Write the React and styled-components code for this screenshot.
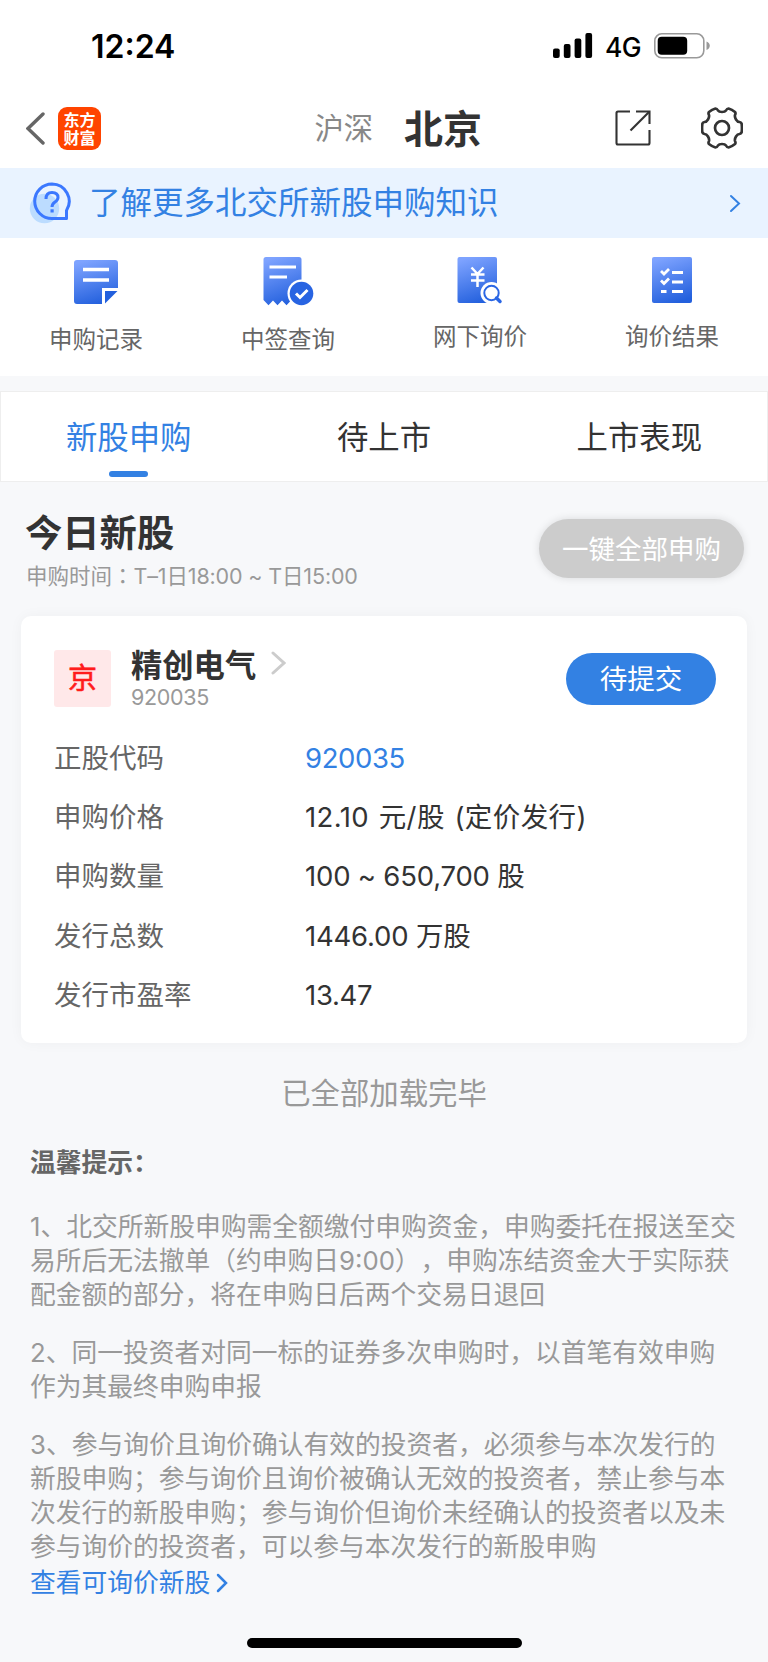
import React from 'react';
import styled, { createGlobalStyle } from 'styled-components';

const GlobalStyle = createGlobalStyle`
  * {
    box-sizing: border-box;
  }

  body {
    margin: 0;
    background: #f7f8fa;
    font-family: Inter, 'Noto Sans CJK SC', sans-serif;
    text-spacing-trim: space-all;
    color: #333;
  }

  svg {
    display: block;
    flex: none;
  }
`;

const Page = styled.div`
  width: 768px;
  height: 1662px;
  display: flex;
  flex-direction: column;
  overflow: hidden;
  white-space: nowrap;
`;

const StatusBar = styled.div`
  height: 88px;
  padding: 4px 58px 0 91px;
  display: flex;
  align-items: center;
  background: #fff;
  color: #000;
`;

const Clock = styled.span`
  font-size: 32px;
  font-weight: 600;
`;

const StatusIcons = styled.div`
  margin-left: auto;
  display: flex;
  align-items: center;
`;

const Network = styled.span`
  width: 36px;
  margin: 2px 13px 0 12px;
  font-size: 26.5px;
  font-weight: 500;
  letter-spacing: -0.6px;
`;

const NavBar = styled.div`
  height: 80px;
  padding: 0 25px 0 26px;
  display: flex;
  align-items: center;
  background: #fff;
`;

const Logo = styled.div`
  width: 43px;
  height: 43px;
  margin-left: 13px;
  padding: 3px 5px 0 5.5px;
  border-radius: 9px;
  background: #ff4400;
  color: #fff;
  font-family: 'Noto Sans CJK SC', sans-serif;
  font-size: 16px;
  font-weight: 700;
  line-height: 18px;
  white-space: normal;
`;

const Markets = styled.div`
  margin-left: 213.5px;
  padding-top: 2px;
  display: flex;
  align-items: center;
`;

const Market = styled.span`
  font-size: ${({ $active }) => ($active ? '39px' : '29.3px')};
  font-weight: ${({ $active }) => ($active ? 700 : 400)};
  color: ${({ $active }) => ($active ? '#333' : '#888')};
  line-height: 48px;
  margin-right: ${({ $active }) => ($active ? 0 : '31px')};
`;

const NavActions = styled.div`
  margin-left: auto;
  display: flex;
  align-items: center;
  gap: 50px;
`;

const Banner = styled.div`
  height: 70px;
  padding: 0 27px 0 29px;
  display: flex;
  align-items: center;
  background: #e9f3ff;
  color: #3381e3;
`;

const BannerText = styled.span`
  flex: 1;
  margin-left: 17px;
  font-size: 31.5px;
  line-height: 46px;
`;

const Menu = styled.div`
  height: 138px;
  display: grid;
  grid-template-columns: repeat(4, 1fr);
  background: #fff;
`;

const MenuItem = styled.div`
  padding-top: 19px;
  display: flex;
  flex-direction: column;
  align-items: center;
`;

const MenuLabel = styled.span`
  margin-top: ${({ $gap }) => $gap}px;
  font-size: 23.5px;
  line-height: 34px;
  color: #666;
`;

const Tabs = styled.div`
  height: 91px;
  margin-top: 15px;
  display: grid;
  grid-template-columns: repeat(3, 1fr);
  background: #fff;
  border: 1px solid #eee;
`;

const Tab = styled.div`
  padding-top: 23px;
  display: flex;
  flex-direction: column;
  align-items: center;
  font-size: 31.4px;
  line-height: 46px;
  color: ${({ $active }) => ($active ? '#3381e3' : '#333')};

  &::after {
    content: '';
    width: 39px;
    height: 6px;
    margin-top: 10px;
    border-radius: 3px;
    background: ${({ $active }) => ($active ? '#3381e3' : 'transparent')};
  }
`;

const SectionHead = styled.div`
  height: 134px;
  padding: 26px 24px 0 25px;
  display: flex;
  justify-content: space-between;
`;

const SectionTitle = styled.h2`
  margin: 0;
  font-size: 37.3px;
  font-weight: 700;
  line-height: 52px;
`;

const SectionNote = styled.p`
  margin: 0;
  padding-left: 1px;
  font-size: 21.5px;
  line-height: 29px;
  color: #999;
`;

const NoteTime = styled.span`
  letter-spacing: -0.15px;
`;

// the TC face keeps the full-width colon in the middle of its cell
const MidColon = styled.span`
  font-family: 'Noto Sans CJK TC', sans-serif;
`;

const PillButton = styled.button`
  width: ${({ $width }) => $width}px;
  height: ${({ $height }) => $height}px;
  padding: 0 0 3px;
  border: 0;
  border-radius: 30px;
  background: ${({ $disabled }) => ($disabled ? '#ccc' : '#3381e3')};
  box-shadow: ${({ $disabled }) => ($disabled ? '0 0 8px rgba(0, 0, 0, 0.12)' : 'none')};
  color: #fff;
  font-family: inherit;
  font-size: ${({ $size }) => $size}px;
`;

const ApplyAll = styled(PillButton)`
  margin-top: 11px;
`;

const Submit = styled(PillButton)`
  margin-top: 2.5px;
`;

const Card = styled.div`
  height: 427px;
  margin: 0 21px;
  padding: 34px 31px 0 33px;
  border-radius: 10px;
  background: #fff;
  box-shadow: 0 0 14px rgba(0, 0, 0, 0.04);
`;

const StockHead = styled.div`
  height: 78px;
  display: flex;
  align-items: flex-start;
`;

const Badge = styled.div`
  width: 57px;
  height: 57px;
  border-radius: 3px;
  background: #ffe8e9;
  color: #ff1c1c;
  font-size: 29px;
  line-height: 57px;
  text-align: center;
  -webkit-text-stroke: 0.6px #ff1c1c;
`;

const StockInfo = styled.div`
  flex: 1;
  margin-left: 20px;
  margin-top: -6px;
`;

const StockName = styled.div`
  display: flex;
  align-items: center;
  gap: 15px;
  font-size: 31.3px;
  font-weight: 700;
  line-height: 44px;

  svg {
    margin-top: -6px;
  }
`;

const StockCode = styled.div`
  margin-top: -2px;
  font-size: 21.5px;
  line-height: 22px;
  letter-spacing: -0.3px;
  color: #999;
`;

const Row = styled.div`
  height: 59.3px;
  display: flex;
  align-items: center;
  font-size: 27.5px;
  line-height: 40px;
`;

const RowLabel = styled.span`
  width: 251px;
  color: #666;
`;

const RowValue = styled.span`
  letter-spacing: ${({ $spacing }) => $spacing || 0}px;
  word-spacing: ${({ $wordSpacing }) => $wordSpacing || 0}px;
  color: ${({ $link }) => ($link ? '#3381e3' : '#333')};
`;

const LoadedText = styled.p`
  height: 44px;
  margin: 29px 0 0;
  font-size: 29.4px;
  line-height: 44px;
  text-align: center;
  color: #999;
`;

const Tips = styled.div`
  padding: 30px 30px 0;
  font-size: 25.75px;
  line-height: 34px;
  color: #999;
`;

const TipsTitle = styled.h3`
  margin: 0 0 30px;
  font-size: 25.75px;
  font-weight: 700;
  color: #666;
`;

const Tip = styled.p`
  margin: 0 0 24px;
`;

const Line = styled.span`
  display: block;
`;

const MoreLink = styled.a`
  margin-top: -22px;
  display: flex;
  align-items: center;
  gap: 6px;
  color: #3381e3;
`;

const HomeBar = styled.div`
  width: 275px;
  height: 10px;
  margin: auto auto 14px;
  border-radius: 5px;
  background: #000;
`;

const Chevron = ({ width, height, color, stroke, flip }) => (
  <svg width={width} height={height} viewBox={`0 0 ${width} ${height}`} fill="none">
    <path
      d={
        flip
          ? `M${width - 2} 2 L2 ${height / 2} L${width - 2} ${height - 2}`
          : `M2 2 L${width - 2} ${height / 2} L2 ${height - 2}`
      }
      stroke={color}
      strokeWidth={stroke}
      strokeLinecap="round"
    />
  </svg>
);

const SignalIcon = () => (
  <svg width="40" height="26" viewBox="0 0 40 26">
    <rect x="0" y="15.5" width="6.7" height="9.5" rx="2" />
    <rect x="10.8" y="11" width="6.7" height="14" rx="2" />
    <rect x="21.6" y="5.5" width="6.7" height="19.5" rx="2" />
    <rect x="32.4" y="0" width="6.7" height="25" rx="2" />
  </svg>
);

const BatteryIcon = () => (
  <svg width="56" height="26" viewBox="0 0 56 26">
    <rect x="0.8" y="0.8" width="49" height="24" rx="7" fill="none" stroke="#999" strokeWidth="1.6" />
    <rect x="3.7" y="3.7" width="29.5" height="18" rx="4" />
    <path d="M52.5 8.5 Q55.8 10 55.8 12.8 Q55.8 15.5 52.5 17 Z" fill="#999" />
  </svg>
);

const ShareIcon = () => (
  <svg width="36" height="36" viewBox="0 0 36 36" fill="none" stroke="#333" strokeWidth="2.1">
    <path d="M15 1.5 H3 Q1.5 1.5 1.5 3 V33 Q1.5 34.5 3 34.5 H33 Q34.5 34.5 34.5 33 V20" />
    <path d="M21 1.5 H34.5 V14" />
    <path d="M34 2 L15.5 20.5" />
  </svg>
);

const GearIcon = () => (
  <svg width="42" height="42" viewBox="0 0 42 42" fill="none" stroke="#333" strokeWidth="2.7" strokeLinejoin="round">
    <path d="M14.5 1.5 Q16 1.5 17 3.5 Q18 5 21 5 Q24 5 25 3.5 Q26 1.5 27.5 1.5 Q31 2.5 34 5 Q35 6 34 8 Q33.5 10 35 12.5 Q36.5 15 38.5 15 Q40.5 15.5 40.7 17 Q41.2 21 40.7 25 Q40.5 26.5 38.5 27 Q36.5 27 35 29.5 Q33.5 32 34 34 Q35 36 34 37 Q31 39.5 27.5 40.5 Q26 40.5 25 38.5 Q24 37 21 37 Q18 37 17 38.5 Q16 40.5 14.5 40.5 Q11 39.5 8 37 Q7 36 8 34 Q8.5 32 7 29.5 Q5.5 27 3.5 27 Q1.5 26.5 1.3 25 Q0.8 21 1.3 17 Q1.5 15.5 3.5 15 Q5.5 15 7 12.5 Q8.5 10 8 8 Q7 6 8 5 Q11 2.5 14.5 1.5 Z" />
    <circle cx="21" cy="21" r="7" />
  </svg>
);

const HelpIcon = () => (
  <svg width="43" height="42" viewBox="0 0 43 42" fill="none">
    <circle cx="15.5" cy="26.5" r="14.7" fill="#bcdcff" />
    <path
      d="M23 2 A17.3 17.3 0 1 0 23 36.600 H37.500 V28.500 A17.300 17.300 0 0 0 23 2 Z"
      stroke="#3b78ff"
      strokeWidth="3"
      strokeLinejoin="round"
    />
    <path d="M17 17 Q17 10.5 23 10.5 Q29 10.5 29 15.5 Q29 18 26 20 Q23 22 23 25" stroke="#3b78ff" strokeWidth="3" />
    <rect x="21.5" y="27.3" width="3.2" height="3.2" fill="#3b78ff" />
  </svg>
);

const Gradient = ({ id }) => (
  <defs>
    <linearGradient id={id} x1="0.3" y1="0" x2="0.6" y2="1">
      <stop offset="0" stopColor="#7ea3ff" />
      <stop offset="1" stopColor="#2360dd" />
    </linearGradient>
  </defs>
);

const RecordIcon = () => (
  <svg width="50" height="50" viewBox="0 0 50 50">
    <Gradient id="record" />
    <path d="M6 3 H44 Q47 3 47 6 V31 H31 V47 H6 Q3 47 3 44 V6 Q3 3 6 3 Z" fill="url(#record)" />
    <path d="M34 34 H46.5 L34 46.5 Z" fill="#2360dd" />
    <path d="M12 12.5 H38 M12 23 H38" stroke="#fff" strokeWidth="3.4" />
  </svg>
);

const LotteryIcon = () => (
  <svg width="52" height="50" viewBox="0 0 52 50">
    <Gradient id="lottery" />
    <path
      d="M4 0 H37 Q39.5 0 39.5 2.5 V44 H28.5 L24.5 48.2 L20 43.5 L15.5 48.2 L11 43.5 L6.5 48.2 L1.5 43 V2.5 Q1.5 0 4 0 Z"
      fill="url(#lottery)"
    />
    <path d="M7.5 10 H34 M7.5 20 H25" stroke="#fff" strokeWidth="3.2" />
    <circle cx="39.5" cy="36.5" r="14" fill="#fff" />
    <circle cx="39.5" cy="36.5" r="11.8" fill="#2864e2" />
    <path d="M34 36.5 L38 40.5 L45.5 33" stroke="#fff" strokeWidth="3" fill="none" />
  </svg>
);

const InquiryIcon = () => (
  <svg width="46" height="50" viewBox="0 0 46 50">
    <Gradient id="inquiry" />
    <rect x="0.5" y="0" width="39.5" height="46" rx="2" fill="url(#inquiry)" />
    <path d="M14.5 10.5 L20.5 17 L26.5 10.5 M20.5 17 V30 M14 17.5 H27.5 M14 23.5 H27.5" stroke="#fff" strokeWidth="2.5" fill="none" />
    <circle cx="34.5" cy="36" r="11" fill="#fff" />
    <circle cx="34.5" cy="36" r="7.2" fill="#fff" stroke="#2a66e4" strokeWidth="2" />
    <path d="M39.5 41 L43 44.5" stroke="#2a66e4" strokeWidth="3.5" strokeLinecap="round" />
  </svg>
);

const ResultIcon = () => (
  <svg width="40" height="50" viewBox="0 0 40 50">
    <Gradient id="result" />
    <rect x="0" y="0" width="40" height="46" rx="2" fill="url(#result)" />
    <path d="M20 15.5 H31 M20 25 H31 M20 34.5 H31 M9 34.5 H14.5" stroke="#fff" strokeWidth="3" />
    <path d="M9 14 L12 17 L17 12 M9 23.5 L12 26.5 L17 21.5" stroke="#fff" strokeWidth="2.8" fill="none" />
  </svg>
);

const menuItems = [
  { label: '申购记录', icon: RecordIcon, gap: 16 },
  { label: '中签查询', icon: LotteryIcon, gap: 16 },
  { label: '网下询价', icon: InquiryIcon, gap: 13 },
  { label: '询价结果', icon: ResultIcon, gap: 13 },
];

const tabs = ['新股申购', '待上市', '上市表现'];

const rows = [
  { label: '正股代码', value: '920035', link: true, spacing: -0.4 },
  { label: '申购价格', value: '12.10 元/股 (定价发行)', spacing: 0.4, wordSpacing: 1.5 },
  { label: '申购数量', value: '100 ~ 650,700 股', spacing: -0.2 },
  { label: '发行总数', value: '1446.00 万股', spacing: -0.2 },
  { label: '发行市盈率', value: '13.47', spacing: -0.3 },
];

const tips = [
  [
    '1、北交所新股申购需全额缴付申购资金，申购委托在报送至交',
    '易所后无法撤单（约申购日9:00），申购冻结资金大于实际获',
    '配金额的部分，将在申购日后两个交易日退回',
  ],
  ['2、同一投资者对同一标的证券多次申购时，以首笔有效申购', '作为其最终申购申报'],
  [
    '3、参与询价且询价确认有效的投资者，必须参与本次发行的',
    '新股申购；参与询价且询价被确认无效的投资者，禁止参与本',
    '次发行的新股申购；参与询价但询价未经确认的投资者以及未',
    '参与询价的投资者，可以参与本次发行的新股申购',
  ],
];

const App = () => {
  return (
    <Page lang="zh-CN">
      <GlobalStyle />
      <StatusBar>
        <Clock>12:24</Clock>
        <StatusIcons>
          <SignalIcon />
          <Network>4G</Network>
          <BatteryIcon />
        </StatusIcons>
      </StatusBar>
      <NavBar>
        <Chevron width={19} height={33} color="#666" stroke={3.4} flip />
        <Logo>东方财富</Logo>
        <Markets>
          <Market>沪深</Market>
          <Market $active>北京</Market>
        </Markets>
        <NavActions>
          <ShareIcon />
          <GearIcon />
        </NavActions>
      </NavBar>
      <Banner>
        <HelpIcon />
        <BannerText>了解更多北交所新股申购知识</BannerText>
        <Chevron width={12} height={19} color="#3381e3" stroke={2} />
      </Banner>
      <Menu>
        {menuItems.map(({ label, icon: Icon, gap }) => (
          <MenuItem key={label}>
            <Icon />
            <MenuLabel $gap={gap}>{label}</MenuLabel>
          </MenuItem>
        ))}
      </Menu>
      <Tabs>
        {tabs.map((tab, index) => (
          <Tab key={tab} $active={index === 0}>{tab}</Tab>
        ))}
      </Tabs>
      <SectionHead>
        <div>
          <SectionTitle>今日新股</SectionTitle>
          <SectionNote>
            申购时间<MidColon lang="zh-TW">：</MidColon>
            <NoteTime>T–1日18:00 ~ T日15:00</NoteTime>
          </SectionNote>
        </div>
        <ApplyAll $disabled $width={205} $height={59} $size={26.5}>一键全部申购</ApplyAll>
      </SectionHead>
      <Card>
        <StockHead>
          <Badge>京</Badge>
          <StockInfo>
            <StockName>
              精创电气
              <Chevron width={15} height={24} color="#ccc" stroke={3} />
            </StockName>
            <StockCode>920035</StockCode>
          </StockInfo>
          <Submit $width={150} $height={52} $size={27.5}>待提交</Submit>
        </StockHead>
        {rows.map((row) => (
          <Row key={row.label}>
            <RowLabel>{row.label}</RowLabel>
            <RowValue $link={row.link} $spacing={row.spacing} $wordSpacing={row.wordSpacing}>
              {row.value}
            </RowValue>
          </Row>
        ))}
      </Card>
      <LoadedText>已全部加载完毕</LoadedText>
      <Tips>
        <TipsTitle>温馨提示：</TipsTitle>
        {tips.map((lines) => (
          <Tip key={lines[0]}>
            {lines.map((line) => (
              <Line key={line}>{line}</Line>
            ))}
          </Tip>
        ))}
        <MoreLink>
          查看可询价新股
          <Chevron width={12} height={20} color="#3381e3" stroke={2.5} />
        </MoreLink>
      </Tips>
      <HomeBar />
    </Page>
  );
};

export default App;
